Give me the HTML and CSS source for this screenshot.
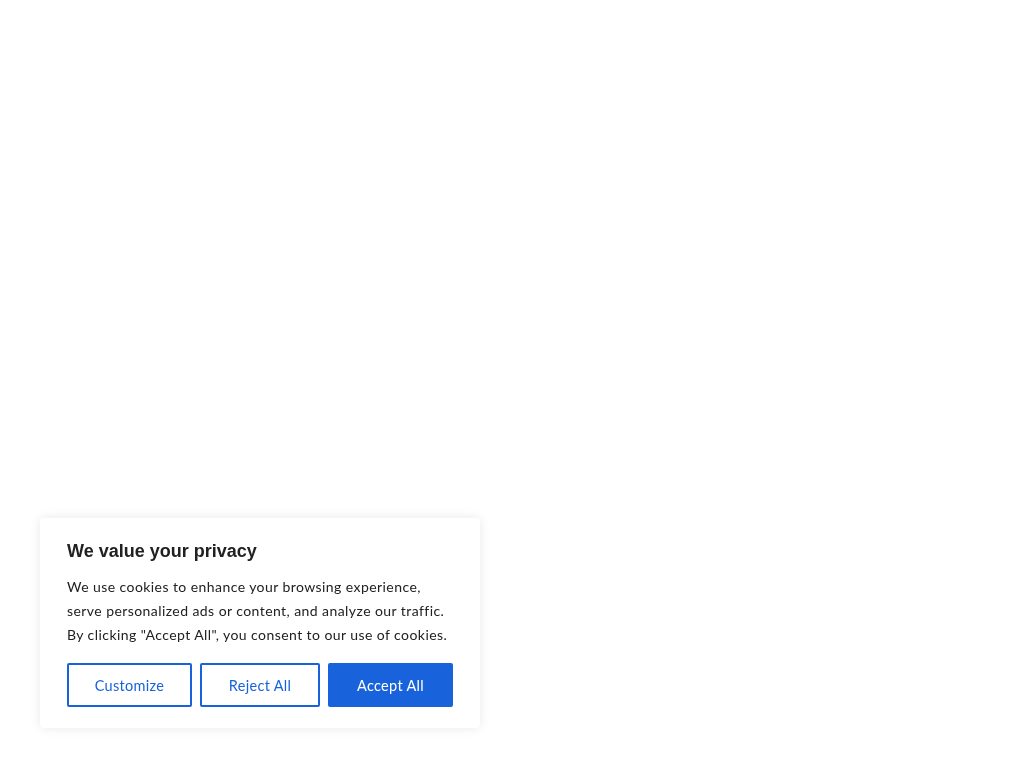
FILE: index.html
```html
<!DOCTYPE html>
<html lang="en">
<head>
<meta charset="utf-8">
<title>Cookie consent</title>
<link rel="stylesheet" href="styles.css">
</head>
<body>
<div class="consent" role="dialog" aria-label="We value your privacy">
  <p class="consent-title">We value your privacy</p>
  <p class="consent-text">We use cookies to enhance your browsing experience, serve personalized ads or content, and analyze our traffic. By clicking "Accept All", you consent to our use of cookies.</p>
  <div class="consent-actions">
    <button class="btn btn-outline btn-customize">Customize</button>
    <button class="btn btn-outline btn-reject">Reject All</button>
    <button class="btn btn-solid btn-accept">Accept All</button>
  </div>
</div>
</body>
</html>
```

FILE: styles.css
```css
html, body {
  margin: 0;
  padding: 0;
  background: #ffffff;
  height: 100%;
}
body {
  font-family: "Lato", "Liberation Sans", sans-serif;
}
.consent {
  position: fixed;
  left: 40px;
  bottom: 40px;
  width: 440px;
  box-sizing: border-box;
  padding: 21px 27px 21px 27px;
  background: #ffffff;
  border-radius: 4px;
  box-shadow: 0 0 12px rgba(0, 0, 0, 0.09);
}
.consent-title {
  margin: 0 0 12px 0;
  font-family: "Liberation Sans", Arial, sans-serif;
  font-weight: 700;
  font-size: 18px;
  line-height: 24px;
  color: #212121;
}
.consent-text {
  margin: 0 0 16px 0;
  font-size: 14px;
  line-height: 24px;
  color: #212121;
  letter-spacing: 0.43px;
}
.consent-actions {
  display: flex;
  gap: 8px;
}
.btn {
  height: 44px;
  box-sizing: border-box;
  border: 2px solid #1863dc;
  border-radius: 2px;
  font-family: "Lato", "Liberation Sans", sans-serif;
  font-size: 14.5px;
  letter-spacing: 0.3px;
  padding: 0;
  cursor: pointer;
}
.btn-outline {
  background: #ffffff;
  color: #1863dc;
}
.btn-solid {
  background: #1863dc;
  color: #ffffff;
}
.btn-customize { width: 125px; }
.btn-reject { width: 120px; }
.btn-accept { width: 125px; }
```
